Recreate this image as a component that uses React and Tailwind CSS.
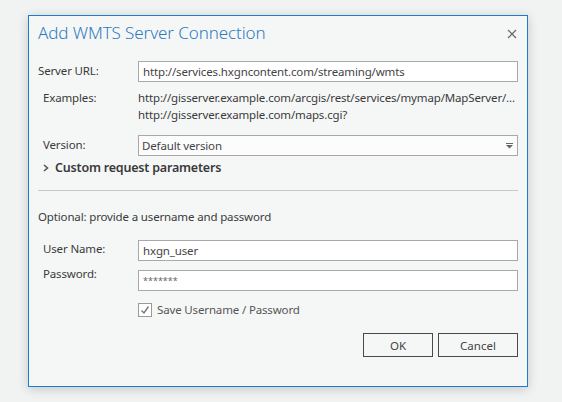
import { useState } from "react";

const font = { fontFamily: '"Noto Sans", "Open Sans", sans-serif' };

function Field({ label, indent = true, children, labelClass = "" }) {
  return (
    <div className="flex items-start">
      <div
        className={`w-[100px] shrink-0 text-[11.5px] tracking-[-0.15px] text-[#3a3a3a] ${indent ? "pl-[5px]" : ""} ${labelClass}`}
      >
        {label}
      </div>
      <div className="flex-1">{children}</div>
    </div>
  );
}

function TextBox({ value, small }) {
  return (
    <div className="h-[21px] border border-[#a8a8a8] bg-white flex items-center px-[4px]">
      <span
        className={
          small
            ? "text-[9px] text-[#666] leading-none"
            : "text-[11.5px] tracking-[-0.15px] text-[#444]"
        }
      >
        {value}
      </span>
    </div>
  );
}

export default function App() {
  const [save, setSave] = useState(true);

  return (
    <div className="w-[562px] h-[402px] bg-[#f1f2f2] pt-[15px] pl-[28px]" style={font}>
      <div className="w-[500px] h-[372px] border border-[#1f7ccc] bg-[#f5f7f7] shadow-[0_2px_10px_rgba(0,0,0,0.18)] flex flex-col px-[9px]">
        {/* header */}
        <div className="flex items-start justify-between pt-[5px]">
          <h1 className="text-[17px] font-light text-[#2f7bbf] leading-[24px] tracking-[-0.1px]">
            Add WMTS Server Connection
          </h1>
          <svg width="10" height="10" viewBox="0 0 10 10" className="mt-[8px] mr-[1px]">
            <path d="M1 1 L9 9 M9 1 L1 9" stroke="#666" strokeWidth="1.2" />
          </svg>
        </div>

        <div className="mt-[16px]">
          <Field label="Server URL:" indent={false} labelClass="pt-[1px]">
            <TextBox value="http://services.hxgncontent.com/streaming/wmts" />
          </Field>
        </div>

        <div className="mt-[7px]">
          <Field label="Examples:">
            <div className="text-[11.5px] tracking-[-0.15px] leading-[17px] text-[#3a3a3a]">
              <div>http://gisserver.example.com/arcgis/rest/services/mymap/MapServer/...</div>
              <div>http://gisserver.example.com/maps.cgi?</div>
            </div>
          </Field>
        </div>

        <div className="mt-[12px]">
          <Field label="Version:" labelClass="pt-[1px]">
            <div className="h-[21px] border border-[#a8a8a8] bg-[#fcfcfc] flex items-center justify-between pl-[3px] pr-[4px]">
              <span className="text-[11.5px] tracking-[-0.15px] text-[#444]">Default version</span>
              <svg width="7" height="6" viewBox="0 0 7 6">
                <rect x="0" y="0" width="7" height="1" fill="#666" />
                <path d="M0 2 H7 L3.5 5.5 Z" fill="#666" />
              </svg>
            </div>
          </Field>
        </div>

        <div className="flex items-center mt-[2px] pl-[5px] h-[20px]">
          <svg width="6" height="8" viewBox="0 0 6 8" className="mr-[6px]">
            <path d="M1 1 L4.5 4 L1 7" fill="none" stroke="#555" strokeWidth="1.6" />
          </svg>
          <span className="text-[12.5px] tracking-[-0.2px] font-semibold text-[#3a3a3a]">
            Custom request parameters
          </span>
        </div>

        <div className="mt-[12px] h-px bg-[#c8c8c8]" />

        <div className="mt-[17px] text-[11.5px] tracking-[-0.15px] text-[#3a3a3a] leading-[17px]">
          Optional: provide a username and password
        </div>

        <div className="mt-[15px]">
          <Field label="User Name:">
            <TextBox value="hxgn_user" />
          </Field>
        </div>

        <div className="mt-[9px]">
          <Field label="Password:" labelClass="-mt-[5px]">
            <TextBox value="*******" small />
          </Field>
        </div>

        <div className="mt-[10px] flex items-center pl-[100px]">
          <button
            onClick={() => setSave(!save)}
            className="w-[14px] h-[14px] border border-[#9a9a9a] bg-white flex items-center justify-center"
          >
            {save && (
              <svg width="10" height="10" viewBox="0 0 10 10">
                <path d="M1.5 5.5 L4 8 L8.5 1.5" fill="none" stroke="#777" strokeWidth="1.4" />
              </svg>
            )}
          </button>
          <span className="ml-[5px] text-[11.5px] tracking-[-0.15px] text-[#555]">
            Save Username / Password
          </span>
        </div>

        <div className="mt-[15px] flex justify-end gap-[5px]">
          <button className="w-[70px] h-[24px] border border-[#4a4a4a] text-[11.5px] text-[#444]">OK</button>
          <button className="w-[80px] h-[24px] border border-[#4a4a4a] text-[11.5px] text-[#444]">Cancel</button>
        </div>
      </div>
    </div>
  );
}
